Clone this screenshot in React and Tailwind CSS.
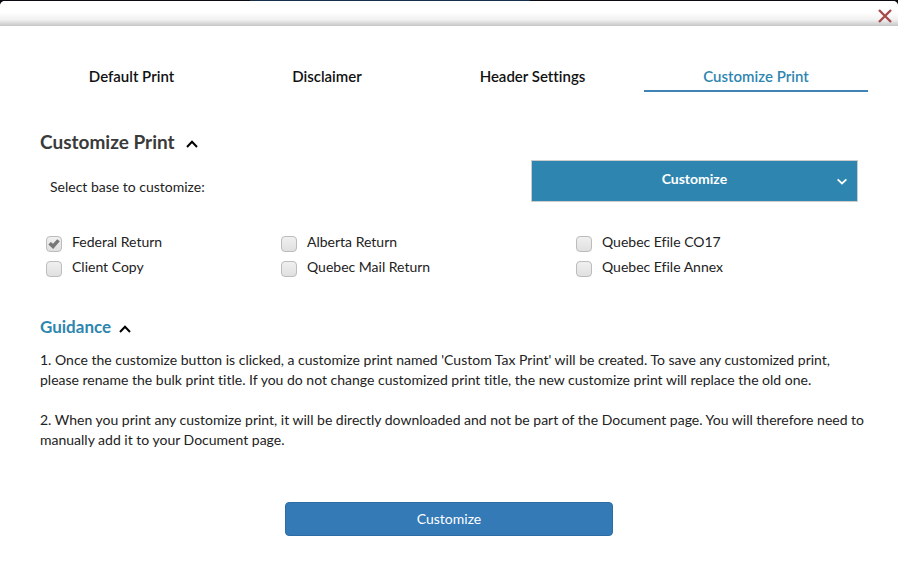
import { useState } from "react";

const tabs = ["Default Print", "Disclaimer", "Header Settings", "Customize Print"];

const options = [
  "Federal Return",
  "Alberta Return",
  "Quebec Efile CO17",
  "Client Copy",
  "Quebec Mail Return",
  "Quebec Efile Annex",
];

function Chevron({ className, up }) {
  return (
    <svg viewBox="0 0 12 8" className={className} fill="none" stroke="currentColor" strokeWidth="2" aria-hidden="true">
      <path d={up ? "M1 7 L6 1.8 L11 7" : "M1 1.5 L6 6.2 L11 1.5"} />
    </svg>
  );
}

function Option({ label, checked, onChange }) {
  return (
    <label className="flex h-[25px] items-start gap-[10px]">
      <span className="relative mt-1 block size-4 shrink-0">
        <input
          type="checkbox"
          checked={checked}
          onChange={onChange}
          className="block size-4 appearance-none rounded-[4px] border border-[#bcbcbc] bg-linear-to-b from-[#f0f0f0] to-[#e0e0e0]"
        />
        {checked && (
          <svg viewBox="0 0 16 16" className="pointer-events-none absolute inset-0 size-4" aria-hidden="true">
            <path d="M2.4 8.6 L4.8 6.1 L7 7.8 L11.2 3.2 L13.8 5.2 L7.2 12.9 Z" fill="#777777" />
          </svg>
        )}
      </span>
      <span className="leading-5">{label}</span>
    </label>
  );
}

export default function App() {
  const [active, setActive] = useState(3);
  const [checked, setChecked] = useState([0]);

  const toggle = (i) =>
    setChecked((list) => (list.includes(i) ? list.filter((n) => n !== i) : [...list, i]));

  return (
    <div className="min-h-screen bg-[linear-gradient(to_right,#0b0b14_0,#0b0b14_250px,#17304a_250px,#17304a_530px,#0b0b14_530px)] pt-px font-['Lato',sans-serif] text-sm text-[#222222] [font-variant-ligatures:none]">
      <div className="min-h-[calc(100vh-1px)] rounded-t-[5px] bg-white">
        <header className="flex h-[25px] justify-end rounded-t-[5px] bg-linear-to-b from-white from-45% via-[#f1f1f1] via-75% to-[#c6c6c6] pr-[6px] pt-2">
          <button type="button" aria-label="Close" className="size-[14px] text-[#a94a4a]">
            <svg viewBox="0 0 14 14" className="size-[14px]" stroke="currentColor" strokeWidth="2.4" fill="none">
              <path d="M1 1 L13 13 M13 1 L1 13" />
            </svg>
          </button>
        </header>

        <nav className="mx-[30px] mt-10 grid grid-cols-[203fr_188fr_223fr_224fr]">
          {tabs.map((tab, i) => (
            <button
              key={tab}
              type="button"
              onClick={() => setActive(i)}
              className={
                i === active
                  ? "h-[26px] border-b-2 border-[#4283b5] pb-1 text-[15px] leading-5 font-semibold text-[#2e86b0]"
                  : "h-[26px] border-b-2 border-transparent pb-1 text-[15px] leading-5 font-semibold text-[#111111]"
              }
            >
              {tab}
            </button>
          ))}
        </nav>

        <main className="px-10">
          <h2 className="mt-9 flex items-center gap-[11px] text-[19px] leading-7 font-bold text-[#3a3a3a]">
            Customize Print
            <Chevron up className="mt-1 h-2 w-3 text-black" />
          </h2>

          <div className="mt-1 flex items-start justify-between">
            <label htmlFor="base" className="mt-[17px] ml-[10px] leading-5">
              Select base to customize:
            </label>
            <div className="relative w-2/5">
              <select
                id="base"
                className="block h-[42px] w-full appearance-none border border-[#cccccc] bg-[#2e86b0] pb-1 text-center text-sm font-bold text-white"
              >
                <option>Customize</option>
              </select>
              <Chevron className="pointer-events-none absolute top-[18px] right-[10px] h-[7px] w-3 text-white" />
            </div>
          </div>

          <div className="mt-[30px] ml-[6px] grid grid-cols-[235fr_295fr_282fr]">
            {options.map((label, i) => (
              <Option key={label} label={label} checked={checked.includes(i)} onChange={() => toggle(i)} />
            ))}
          </div>

          <h3 className="mt-[33px] flex items-center gap-2 text-[17px] leading-6 font-bold text-[#2e86b0]">
            Guidance
            <Chevron up className="mt-1 h-2 w-3 text-black" />
          </h3>

          <div className="-mr-3 mt-[11px] space-y-5 leading-5">
            <p>
              1. Once the customize button is clicked, a customize print named 'Custom Tax Print' will be created. To
              save any customized print, please rename the bulk print title. If you do not change customized print
              title, the new customize print will replace the old one.
            </p>
            <p>
              2. When you print any customize print, it will be directly downloaded and not be part of the Document
              page. You will therefore need to manually add it to your Document page.
            </p>
          </div>

          <button
            type="button"
            className="mx-auto mt-[52px] block h-[34px] w-2/5 rounded-[4px] border border-[#2e6da4] bg-[#337ab7] text-sm text-white"
          >
            Customize
          </button>
        </main>
      </div>
    </div>
  );
}
